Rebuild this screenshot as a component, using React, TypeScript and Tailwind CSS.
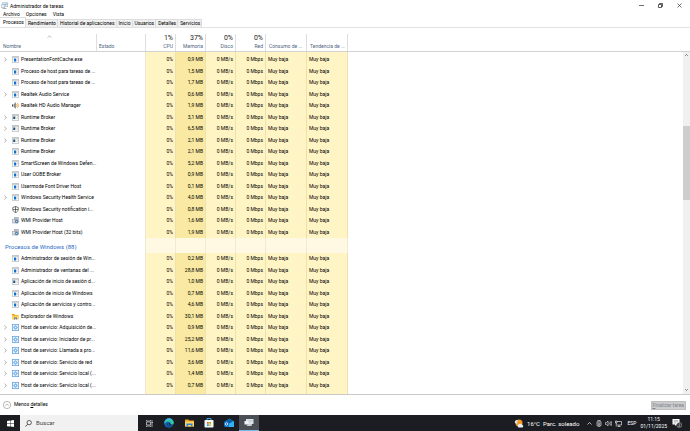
import type { ReactNode } from "react"

type IconName = "app" | "console" | "speaker" | "shield" | "wmi" | "folder" | "gear"

type ProcessRow = {
  name: string
  icon: IconName
  memory: string
  group?: boolean
}

const BACKGROUND: ProcessRow[] = [
  { name: "PresentationFontCache.exe", icon: "app", memory: "0,9 MB", group: true },
  { name: "Proceso de host para tareas de ...", icon: "app", memory: "1,5 MB" },
  { name: "Proceso de host para tareas de ...", icon: "app", memory: "1,7 MB" },
  { name: "Realtek Audio Service", icon: "app", memory: "0,6 MB", group: true },
  { name: "Realtek HD Audio Manager", icon: "speaker", memory: "1,9 MB" },
  { name: "Runtime Broker", icon: "console", memory: "3,1 MB", group: true },
  { name: "Runtime Broker", icon: "console", memory: "6,5 MB", group: true },
  { name: "Runtime Broker", icon: "console", memory: "2,1 MB", group: true },
  { name: "Runtime Broker", icon: "app", memory: "2,1 MB" },
  { name: "SmartScreen de Windows Defen...", icon: "app", memory: "5,2 MB" },
  { name: "User OOBE Broker", icon: "app", memory: "0,9 MB" },
  { name: "Usermode Font Driver Host", icon: "app", memory: "0,1 MB" },
  { name: "Windows Security Health Service", icon: "app", memory: "4,0 MB", group: true },
  { name: "Windows Security notification i...", icon: "shield", memory: "0,8 MB" },
  { name: "WMI Provider Host", icon: "wmi", memory: "1,6 MB" },
  { name: "WMI Provider Host (32 bits)", icon: "wmi", memory: "1,9 MB" },
]

const WINDOWS: ProcessRow[] = [
  { name: "Administrador de sesión de Win...", icon: "app", memory: "0,2 MB" },
  { name: "Administrador de ventanas del ...", icon: "app", memory: "28,8 MB" },
  { name: "Aplicación de inicio de sesión d...", icon: "console", memory: "1,0 MB" },
  { name: "Aplicación de inicio de Windows", icon: "app", memory: "0,7 MB" },
  { name: "Aplicación de servicios y contro...", icon: "app", memory: "4,6 MB" },
  { name: "Explorador de Windows", icon: "folder", memory: "30,1 MB" },
  { name: "Host de servicio: Adquisición de...", icon: "gear", memory: "0,9 MB", group: true },
  { name: "Host de servicio: Iniciador de pr...", icon: "gear", memory: "25,2 MB", group: true },
  { name: "Host de servicio: Llamada a pro...", icon: "gear", memory: "11,6 MB", group: true },
  { name: "Host de servicio: Servicio de red", icon: "gear", memory: "3,6 MB", group: true },
  { name: "Host de servicio: Servicio local (...", icon: "gear", memory: "1,4 MB", group: true },
  { name: "Host de servicio: Servicio local (...", icon: "gear", memory: "0,7 MB", group: true },
]

const TABS = ["Procesos", "Rendimiento", "Historial de aplicaciones", "Inicio", "Usuarios", "Detalles", "Servicios"]

const USAGE = [
  { label: "CPU", total: "1%" },
  { label: "Memoria", total: "37%" },
  { label: "Disco", total: "0%" },
  { label: "Red", total: "0%" },
]

function ProcessIcon({ name }: { name: IconName }) {
  return (
    <svg viewBox="0 0 14 14" className="h-[7px] w-[7px] shrink-0" aria-hidden="true">
      {name === "app" && (
        <>
          <rect x="0.5" y="1.5" width="13" height="11" fill="#fff" stroke="#9a9ea3" />
          <path d="M1 2.500h12" stroke="#a9adb1" strokeWidth="1.500" />
          <rect x="4" y="5" width="4.500" height="6" fill="#0b6fd0" />
          <path d="M10.500 6h2M10.500 8.500h2M1.500 6h1.500" stroke="#a0a0a0" />
        </>
      )}
      {name === "console" && (
        <>
          <rect x="0.5" y="1.5" width="13" height="11" fill="#f6f7f8" stroke="#9a9ea3" />
          <path d="M1 2.500h12" stroke="#a9adb1" strokeWidth="1.500" />
          <rect x="2.500" y="5" width="4" height="5" fill="#1d4f78" />
          <path d="M9 6h3M9 8.500h3" stroke="#b5b5b5" />
        </>
      )}
      {name === "speaker" && (
        <>
          <path d="M0 5h2v4H0z" fill="#444" />
          <path d="M3 4.500 7 1v12L3 9.500z" fill="#8a8a8a" />
          <path d="M7 1v12" stroke="#666" strokeWidth="1" />
          <path d="M9 4.500q2 2.500 0 5M11 2.500q4 4.500 0 9" fill="none" stroke="#e39a3a" strokeWidth="1.800" />
        </>
      )}
      {name === "shield" && (
        <path d="M7 1 12.500 3v4c0 3-2.500 5-5.500 6.300C4 12 1.500 10 1.500 7V3zM7 1v12M1.500 7h11" fill="#fff" stroke="#333" strokeWidth="1.300" />
      )}
      {name === "wmi" && (
        <>
          <rect x="4.500" y="1" width="8" height="6" fill="#b9c2cc" stroke="#8b969f" />
          <rect x="0.500" y="5" width="7" height="7" fill="#dde1e5" stroke="#8f99a2" />
          <circle cx="9.500" cy="9" r="3.500" fill="#5e87b5" stroke="#6a8199" />
          <circle cx="9.500" cy="9" r="1.200" fill="#e8edf2" />
        </>
      )}
      {name === "folder" && (
        <>
          <path d="M0 2h5l1.500 2H13v8.500H0z" fill="#f0ab1e" />
          <path d="M0 5.500h13v7H0z" fill="#ffd25e" />
          <path d="M4 9h6v4H8.500v-2h-3v2H4z" fill="#2f7fd3" />
        </>
      )}
      {name === "gear" && (
        <>
          <rect x="0.700" y="0.700" width="12.600" height="12.600" fill="#e6f2fd" stroke="#5b9fdf" strokeWidth="1.400" />
          <circle cx="7" cy="7" r="2.800" fill="none" stroke="#4a93db" strokeWidth="1.600" />
          <path d="M7 3v1.500M7 9.500V11M3 7h1.500M9.500 7H11" stroke="#4a93db" strokeWidth="1.200" />
        </>
      )}
    </svg>
  )
}

function Process({ row }: { row: ProcessRow }) {
  const cell = "border-r border-[#efe0ad] bg-[#fff4c4] p-0 pr-[2px] text-right"
  return (
    <tr className="leading-[11px] odd:h-[11px] even:h-[12px]">
      <td className="p-0">
        <div className="flex h-[11px] items-center">
          <span className="flex w-[12px] shrink-0 items-center pl-[4px]">
            {row.group ? (
              <button type="button" aria-label={`Expandir ${row.name}`} className="flex">
                <svg viewBox="0 0 4 6" className="h-[5px] w-[3px]" aria-hidden="true">
                  <path d="m.5.5 2.700 2.500L.5 5.500" fill="none" stroke="#777" strokeWidth=".8" />
                </svg>
              </button>
            ) : null}
          </span>
          <ProcessIcon name={row.icon} />
          <span className="ml-[2px]">{row.name}</span>
        </div>
      </td>
      <td className="border-r border-[#efe9d0] p-0" />
      <td className={cell}>0%</td>
      <td className="border-r border-[#efe0ad] bg-[#f9e9a2] p-0 pr-[2px] text-right">{row.memory}</td>
      <td className={cell}>0 MB/s</td>
      <td className={cell}>0 Mbps</td>
      <td className="border-r border-[#efe0ad] bg-[#fff4c4] p-0 pl-[2px]">Muy baja</td>
      <td className="border-r border-[#efe0ad] bg-[#fff4c4] p-0 pl-[2px]">Muy baja</td>
      <td className="p-0" />
    </tr>
  )
}

// Empty strip that carries the column shading above and below the rows
function Strip({ className }: { className: string }) {
  const cell = "border-r border-[#efe0ad] bg-[#fff4c4] p-0"
  return (
    <tr className={className}>
      <td className="p-0" />
      <td className="border-r border-[#efe9d0] p-0" />
      <td className={cell} />
      <td className="border-r border-[#efe0ad] bg-[#f9e9a2] p-0" />
      <td className={cell} />
      <td className={cell} />
      <td className={cell} />
      <td className={cell} />
      <td className="p-0" />
    </tr>
  )
}

function ProcessTable() {
  const head = "border-r border-[#dedede] p-0 align-bottom font-normal"
  const shade = "border-r border-[#f3ead0] bg-[#fff9e3] p-0"
  return (
    <table className="w-full table-fixed border-separate border-spacing-0 whitespace-nowrap">
      <colgroup>
        <col className="w-[97px]" />
        <col className="w-[49px]" />
        <col className="w-[30px]" />
        <col className="w-[30px]" />
        <col className="w-[30px]" />
        <col className="w-[30px]" />
        <col className="w-[41px]" />
        <col className="w-[41px]" />
        <col />
      </colgroup>
      <thead className="leading-[8px] text-[#4f6580]">
        <tr className="h-[17px]">
          <th className={`${head} pl-[3px] text-left`}>
            <svg viewBox="0 0 6 4" className="mx-auto h-[3px] w-[5px]" aria-hidden="true">
              <path d="m.5 3.500 2.500-2.500 2.500 2.500" fill="none" stroke="#8a8a8a" strokeWidth=".8" />
            </svg>
            <div className="mt-[4px] pb-[1px]">Nombre</div>
          </th>
          <th className={`${head} pb-[1px] pl-[2px] text-left`}>Estado</th>
          {USAGE.map((u) => (
            <th key={u.label} className={`${head} pb-[1px] pr-[2px] text-right`}>
              <div className="text-[7px] text-[#222]">{u.total}</div>
              <div>{u.label}</div>
            </th>
          ))}
          <th className={`${head} pb-[1px] pl-[3px] text-left`}>Consumo de ...</th>
          <th className={`${head} pb-[1px] pl-[3px] text-left`}>Tendencia de ...</th>
          <th className="p-0" />
        </tr>
        <tr className="h-px bg-[#d2d2d2]">
          <td colSpan={9} className="p-0" />
        </tr>
      </thead>
      <tbody>
        <Strip className="h-[2px]" />
      </tbody>
      <tbody>
        {BACKGROUND.map((row, i) => (
          <Process key={i} row={row} />
        ))}
      </tbody>
      <tbody>
        <tr className="h-[15px]">
          <th colSpan={2} scope="rowgroup" className="border-r border-[#efe9d0] p-0 pt-[3px] pl-[5px] text-left text-[6px] leading-[12px] font-normal text-[#2b6cc4]">
            Procesos de Windows (88)
          </th>
          <td className={shade} />
          <td className={shade} />
          <td className={shade} />
          <td className={shade} />
          <td className={shade} />
          <td className={shade} />
          <td className="p-0" />
        </tr>
      </tbody>
      <tbody>
        {WINDOWS.map((row, i) => (
          <Process key={i} row={row} />
        ))}
      </tbody>
      <tbody>
        <Strip className="h-[12px]" />
      </tbody>
    </table>
  )
}

function TitleBar() {
  return (
    <header className="flex h-[10px] items-center pl-[1px]">
      <svg viewBox="0 0 14 14" className="h-[7px] w-[7px]" aria-hidden="true">
        <rect x="2.500" y="1.500" width="11" height="8" fill="#dcecf7" stroke="#9aabb8" />
        <path d="M3 7l3-3 2 3 2-4 3 3" fill="none" stroke="#3b8fc4" />
        <rect x="0.500" y="5.500" width="7" height="6" fill="#eef3f6" stroke="#9aabb8" />
        <path d="M3 13h8" stroke="#8c989f" strokeWidth="1.500" />
      </svg>
      <h1 className="ml-[2px] pt-[2px] leading-[8px]">Administrador de tareas</h1>
      <div className="ml-auto flex items-center gap-[14px] pr-[8px] text-[#333]">
        <button type="button" aria-label="Minimizar">
          <svg viewBox="0 0 5 5" className="h-[5px] w-[5px]"><path d="M0 2.500h5" stroke="currentColor" strokeWidth=".7" /></svg>
        </button>
        <button type="button" aria-label="Restaurar">
          <svg viewBox="0 0 5 5" className="h-[5px] w-[5px]"><path d="M.5 1.500h3v3h-3zM1.500 1.500v-1h3v3h-1" fill="none" stroke="currentColor" strokeWidth=".8" /></svg>
        </button>
        <button type="button" aria-label="Cerrar">
          <svg viewBox="0 0 5 5" className="h-[5px] w-[5px]"><path d="m.5.500 4 4m0-4-4 4" stroke="currentColor" strokeWidth=".7" /></svg>
        </button>
      </div>
    </header>
  )
}

function TaskButton({ label, className = "", children }: { label: string; className?: string; children: ReactNode }) {
  return (
    <button type="button" aria-label={label} className={`flex w-[20px] items-center justify-center ${className}`}>
      {children}
    </button>
  )
}

function Taskbar() {
  return (
    <footer className="flex h-[16px] shrink-0 bg-[#1b1d22] text-white">
      <TaskButton label="Inicio">
        <svg viewBox="0 0 8 8" className="h-[7px] w-[7px]"><path d="M0 1.100 3.700.6v3.200H0zM4.200.500 8 0v3.800H4.200zM0 4.300h3.700v3.200L0 7zM4.200 4.300H8V8l-3.800-.5z" fill="#fff" /></svg>
      </TaskButton>
      <label className="mr-[1px] flex w-[118px] items-center bg-[#f1f1f1] pl-[5px]">
        <svg viewBox="0 0 8 8" className="h-[7px] w-[7px]" aria-hidden="true"><circle cx="4.800" cy="3" r="2.500" fill="none" stroke="#222" strokeWidth=".8" /><path d="M3 4.900.5 7.500" stroke="#222" strokeWidth=".9" /></svg>
        <input type="text" placeholder="Buscar" aria-label="Buscar" className="ml-[4px] w-[90px] bg-transparent text-[6px] leading-[10px] outline-none placeholder:text-[#444]" />
      </label>
      <TaskButton label="Vista de tareas">
        <svg viewBox="0 0 14 14" className="h-[7px] w-[7px]" fill="none" stroke="#ddd" strokeWidth="1.400"><path d="M1 4h8v6H1zM1 0v2h8V0M1 14v-2h8v2M12 0v14M11 5h3" /></svg>
      </TaskButton>
      <TaskButton label="Microsoft Edge">
        <svg viewBox="0 0 20 20" className="h-[10px] w-[10px]">
          <circle cx="10" cy="10" r="9.500" fill="#1272c9" />
          <path d="M1 8C2-1 17-2 19.500 8c.8 5-5 6-7 4 1.500-2-.5-5-4-5-4 0-7 2-7.500 6z" fill="#35c4a4" />
          <path d="M1 9c1-9 12-11 16-5C11 2 4 4 1 9z" fill="#38b6ea" />
          <path d="M8 9c-2 5 3 8 9 6-3 5-12 5-13-2 0-3 2-4 4-4z" fill="#0d4a94" />
          <path d="M9.500 9.500c2-.5 3.500 1 3 2.500 1.500 2 4 2 6.500 1l-1 1.500c-6 1.500-10-1-8.500-5z" fill="#1b1d22" />
        </svg>
      </TaskButton>
      <TaskButton label="Explorador de archivos">
        <svg viewBox="0 0 18 16" className="h-[8px] w-[9px]"><path d="M0 1h7l2 2h9v12H0z" fill="#eaa220" /><path d="M0 5h18v10H0z" fill="#ffd460" /><path d="M3 9h12v6h-3v-3H6v3H3z" fill="#2a83d8" /></svg>
      </TaskButton>
      <TaskButton label="Microsoft Store">
        <svg viewBox="0 0 20 20" className="h-[10px] w-[10px]">
          <path d="M6 5V1h8v4" fill="none" stroke="#39a4e8" strokeWidth="2" />
          <rect x="1" y="4" width="18" height="15" rx="1.500" fill="#f4f7fa" />
          <path d="M6 8h3.500v3.500H6z" fill="#ef5327" /><path d="M10.500 8H14v3.500h-3.500z" fill="#7fba00" />
          <path d="M6 12.500h3.500V16H6z" fill="#00a4ef" /><path d="M10.500 12.500H14V16h-3.500z" fill="#ffb900" />
        </svg>
      </TaskButton>
      <TaskButton label="Outlook">
        <svg viewBox="0 0 20 20" className="h-[10px] w-[10px]">
          <path d="M2 7 11 1l9 6v11H2z" fill="#1490df" /><path d="M4 6 11 2l7 4-7 5z" fill="#0c59a4" />
          <path d="m9 12 11-6v12H7z" fill="#35b1f0" /><rect y="7" width="10" height="10" rx="1" fill="#0a6cc4" />
          <circle cx="5" cy="12" r="2.500" fill="none" stroke="#fff" strokeWidth="1.500" />
        </svg>
      </TaskButton>
      <TaskButton label="Administrador de tareas" className="border-b border-[#76b9ed] bg-[#4b4e54]">
        <svg viewBox="0 0 20 18" className="h-[9px] w-[10px]">
          <path d="M4 2h15v10H4z" fill="#dce3e8" /><path d="m7 8 3-3 2 3 3-4 3 4" fill="none" stroke="#9fb8c9" />
          <path d="M1 6h8v7H1z" fill="#f0f2f4" /><path d="M8 12h8l-1 4H5z" fill="#c8cdd1" />
        </svg>
      </TaskButton>

      <div className="ml-auto flex items-center text-[5px] leading-[7px]">
        <svg viewBox="0 0 20 18" className="h-[9px] w-[10px]" aria-hidden="true">
          <circle cx="10" cy="8" r="7" fill="#f59a23" />
          <path d="M2 8a4 4 0 0 1 6-5q-4 5 0 8z" fill="#d8e5f2" />
          <path d="M9 17a3.500 3.500 0 0 1 0-6 5 5 0 0 1 8 1 3 3 0 0 1 0 5z" fill="#e6edf5" />
        </svg>
        <span className="ml-[3px] text-[6px]">16°C</span>
        <span className="ml-[3px] text-[6px]">Parc. soleado</span>
        <button type="button" aria-label="Mostrar iconos ocultos" className="ml-[8px]">
          <svg viewBox="0 0 10 6" className="h-[3px] w-[5px]"><path d="m1 5 4-4 4 4" fill="none" stroke="#fff" strokeWidth="1.300" /></svg>
        </button>
        <svg viewBox="0 0 12 14" className="ml-[4px] h-[7px] w-[6px]" fill="none" stroke="#fff" strokeWidth="1.200" aria-hidden="true"><path d="M3 1h6M2 3.500h8v8H2zM4 13.500h4" /><circle cx="6" cy="7.500" r="1.800" /></svg>
        <svg viewBox="0 0 14 14" className="ml-[3px] h-[7px] w-[7px]" fill="none" stroke="#fff" strokeWidth="1.100" aria-hidden="true"><path d="M1 5h2l3-3v10L3 9H1zM8 5q2 2 0 4M10 3.500q3.500 3.500 0 7M12 2q4 5 0 10" /></svg>
        <svg viewBox="0 0 14 14" className="ml-[3px] h-[7px] w-[7px]" fill="none" stroke="#fff" strokeWidth="1.200" aria-hidden="true"><path d="M4 3h9v7H4M8 10v3M5 13h6M1 2h3v4H1zM2.500 6v7" /></svg>
        <span className="ml-[5px]">ESP</span>
        <div className="ml-[4px] text-center">
          <div>11:15</div>
          <div>01/11/2025</div>
        </div>
        <button type="button" aria-label="Notificaciones" className="mr-[8px] ml-[5px]">
          <svg viewBox="0 0 20 20" className="h-[10px] w-[10px]">
            <path d="M1 2h14v11H9l-3 3v-3H1z" fill="#fff" /><path d="M3.500 5h9M3.500 7.500h9M3.500 10h5" stroke="#777" />
            <circle cx="14.500" cy="14" r="5" fill="#1b1d22" stroke="#ccc" />
            <path d="M13 12.500q1.500-2 3 0 0 1.500-3 4h3.500" fill="none" stroke="#fff" />
          </svg>
        </button>
      </div>
    </footer>
  )
}

export default function App() {
  return (
    <div className="flex h-screen flex-col overflow-hidden bg-white font-[Roboto,'Noto_Sans',sans-serif] text-[5px] text-black">
      <TitleBar />
      <nav className="flex h-[8px] items-center gap-[6px] pl-[3px] leading-[8px]">
        <button type="button">Archivo</button>
        <button type="button">Opciones</button>
        <button type="button">Vista</button>
      </nav>
      <div role="tablist" className="flex h-[10px] items-end border-b border-[#e2e2e2]">
        {TABS.map((tab, i) => (
          <button
            key={tab}
            type="button"
            role="tab"
            aria-selected={i === 0}
            className="h-[8px] border-t border-r border-[#dcdcdc] bg-[#f1f1f1] pr-[1px] pl-[2px] leading-[7px] aria-selected:h-[10px] aria-selected:bg-white aria-selected:pl-[3px]"
          >
            {tab}
          </button>
        ))}
      </div>

      <main className="flex min-h-0 flex-1 overflow-hidden pt-[6px]">
        <div className="min-w-0 flex-1">
          <ProcessTable />
        </div>
        <div className="flex w-[7px] shrink-0 flex-col">
          <div className="h-[18px] border-b border-[#d2d2d2]" />
          <div className="flex flex-1 flex-col items-center bg-[#f0f0f0] pt-[2px]">
            <svg viewBox="0 0 6 4" className="h-[2px] w-[3px]" aria-hidden="true"><path d="m.5 3.500 2.500-2.500 2.500 2.500" fill="none" stroke="#333" strokeWidth="1.300" /></svg>
            <div className="mt-[70px] h-[74px] w-full bg-[#cdcdcd]" />
            <svg viewBox="0 0 6 4" className="mt-auto mb-[3px] h-[2px] w-[3px]" aria-hidden="true"><path d="m.5.500 2.500 2.500 2.500-2.500" fill="none" stroke="#333" strokeWidth="1.300" /></svg>
          </div>
        </div>
      </main>

      <div className="flex h-[21px] shrink-0 items-center border-t border-[#c9c9c9] pr-[4px] pl-[3px]">
        <button type="button" className="flex items-center gap-[3px]">
          <svg viewBox="0 0 16 16" className="h-[8px] w-[8px]" fill="none" stroke="#777" aria-hidden="true"><circle cx="8" cy="8" r="7.300" /><path d="m4.500 9.500 3.500-3.500 3.500 3.500" /></svg>
          <span>Menos <u>d</u>etalles</span>
        </button>
        <button type="button" disabled className="ml-auto h-[9px] border border-[#bfbfbf] bg-[#cccccc] px-px leading-[7px] text-[#7d838c]">
          <u>F</u>inalizar tarea
        </button>
      </div>
      <Taskbar />
    </div>
  )
}
